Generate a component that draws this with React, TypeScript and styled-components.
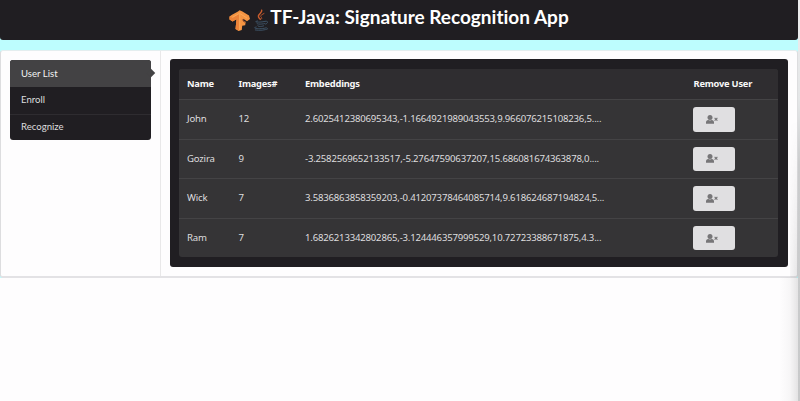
import React from "react";
import styled, { createGlobalStyle } from "styled-components";

const GlobalStyle = createGlobalStyle`
  *, *::before, *::after { box-sizing: border-box; }
  html, body { margin: 0; padding: 0; background: #fefdfe; overflow: hidden; }
`;

const Page = styled.div`
  position: relative;
  width: 800px;
  height: 401px;
  overflow: hidden;
  background: #fefdfe;
  font-family: Lato, sans-serif;
  font-variant-ligatures: none;
`;

const Backdrop = styled.div`
  width: 798px;
  background: #bdfdfe;
`;

const Header = styled.header`
  display: flex;
  justify-content: center;
  height: 40px;
  padding-top: 5px;
  background: #201e22;
  border-radius: 0 0 3px 3px;
`;

const Brand = styled.div`
  display: flex;
  height: 27px;
  align-items: flex-start;
`;

const TensorIcon = styled.svg`
  width: 22px;
  height: 23px;
  margin-top: 4px;
`;

const JavaIcon = styled.svg`
  width: 16px;
  height: 23px;
  margin: 3px 1px 0 2px;
`;

const Title = styled.h1`
  margin: 0;
  color: #fff;
  font-size: 19px;
  font-weight: 700;
  line-height: 24px;
  white-space: nowrap;
`;

const Content = styled.main`
  display: flex;
  height: 228px;
  margin-top: 10px;
  background: #fefdfe;
  border: 1px solid #dddddf;
  border-top-color: #e4eeef;
  border-bottom: 2px solid #e3e2e5;
  border-radius: 3px;
`;

const Sidebar = styled.aside`
  width: 160px;
  padding: 9px 0 0 9px;
  border-right: 1px solid #e9e8e9;
`;

const Menu = styled.nav`
  width: 141px;
  height: 80px;
  background: #201e22;
  border-radius: 3px;
`;

const MenuItem = styled.a<{ $active?: boolean }>`
  position: relative;
  display: flex;
  align-items: center;
  height: ${(p) => (p.$active ? 27 : 26.5)}px;
  padding-left: 11px;
  color: ${(p) => (p.$active ? "#f2f2f2" : "#dddddd")};
  background: ${(p) => (p.$active ? "#434244" : "transparent")};
  border-radius: ${(p) => (p.$active ? "3px 3px 0 0" : "0")};
  font-size: 9.6px;
  line-height: 12px;

  & + & + & { border-top: 1px solid #2e2c30; }

  &::after {
    content: "";
    display: ${(p) => (p.$active ? "block" : "none")};
    position: absolute;
    top: 10px;
    right: -3px;
    width: 6px;
    height: 6px;
    background: #434244;
    transform: rotate(45deg);
  }
`;

const Segment = styled.section`
  width: 618px;
  height: 208px;
  margin: 8px 0 0 9px;
  padding: 10px 10px 10px 9px;
  background: #201e22;
  border-radius: 3px;
`;

const Table = styled.div`
  height: 188px;
  background: #353436;
  border-radius: 3px;
  overflow: hidden;
  font-family: "Noto Sans", sans-serif;
  font-size: 9.6px;
  line-height: 14px;
  color: #dedddf;
`;

const Row = styled.div<{ $head?: boolean }>`
  display: grid;
  grid-template-columns: 51.5px 66.5px 388.5px 1fr;
  align-items: center;
  height: ${(p) => (p.$head ? 30 : 39.6)}px;
  padding-left: 8px;
  background: ${(p) => (p.$head ? "#2f2d30" : "transparent")};
  color: ${(p) => (p.$head ? "#f8f8f8" : "inherit")};
  font-size: ${(p) => (p.$head ? 9.3 : 9.6)}px;
  font-weight: ${(p) => (p.$head ? 700 : 400)};
  letter-spacing: ${(p) => (p.$head ? -0.22 : -0.2)}px;
  & + & { border-top: 1px solid #444345; }
`;

const Cell = styled.span`
  white-space: nowrap;
`;

const RemoveButton = styled.button`
  display: flex;
  align-items: center;
  width: 42px;
  height: 24.5px;
  margin-left: -1px;
  padding: 0 0 0 13px;
  border: 0;
  border-radius: 3px;
  background: #e0dfe1;
  color: #777678;
`;

const EdgeShadow = styled.div`
  position: absolute;
  top: 0;
  right: 0;
  width: 2px;
  height: 401px;
  background: linear-gradient(#ededee 0, #e4e6e7 100px, #cbcccd 165px, #c8c9ca 401px);
`;

const SoftShadow = styled.div`
  position: absolute;
  top: 120px;
  right: 2px;
  width: 18px;
  height: 281px;
  background: linear-gradient(90deg, transparent, rgba(80, 80, 80, 0.04) 55%, rgba(80, 80, 80, 0.15));
  mask-image: linear-gradient(transparent, #000 160px);
  clip-path: polygon(56% 0, 100% 0, 100% 100%, 0 100%, 0 157px, 56% 157px);
`;

const users = [
  { name: "John", images: 12, embeddings: "2.6025412380695343,-1.1664921989043553,9.966076215108236,5...." },
  { name: "Gozira", images: 9, embeddings: "-3.2582569652133517,-5.27647590637207,15.686081674363878,0...." },
  { name: "Wick", images: 7, embeddings: "3.5836863858359203,-0.41207378464085714,9.618624687194824,5..." },
  { name: "Ram", images: 7, embeddings: "1.6826213342802865,-3.124446357999529,10.72723388671875,4.3..." },
];

const UserRemoveIcon = () => (
  <svg width="12" height="9" viewBox="0 0 12 9" fill="currentColor" aria-hidden="true">
    <circle cx="4" cy="2.6" r="2.5" />
    <path d="M0 8.7V7.4C0 6 .8 5.3 2.2 5.1Q4 6 5.8 5.1C7.2 5.3 8 6 8 7.4v1.3Z" />
    <path d="m8.6 2.8 2.8 2.9m0-2.9L8.6 5.7" stroke="currentColor" strokeWidth="1.1" />
  </svg>
);

export default function App() {
  return (
    <Page>
      <GlobalStyle />
      <Backdrop>
        <Header>
          <Brand>
            <TensorIcon viewBox="0 0 22 23" aria-hidden="true">
              <path d="M.5 7.5 3 5.8 9 2.5 10.5 1.2 13 2.2 20 6.5 21 10 18 12.3 14.2 9.8 14 12 16.7 12.8 16.2 16.3 13.2 16.8 12.8 21 9.5 22 6.5 20 7.5 10.2 3.6 12.4.5 10.5Z" fill="#f49442" />
              <path d="m.5 7.5 3.1 1.3L10.3 5v16.8L6.5 20l1-9.8-3.9 2.2L.5 10.5Z" fill="#ed8439" />
              <path d="m3.5 8.3 7-4 7.6 4.8M10.7 5v16" fill="none" stroke="#ffad5e" strokeWidth=".8" />
              <path d="m14 10 .1 2 2 1.4" fill="none" stroke="#9c4e2b" strokeWidth="1" />
            </TensorIcon>
            <JavaIcon viewBox="0 0 16 23" fill="none" strokeLinecap="round" aria-hidden="true">
              <path d="M8.7 2.3C9.5 5.3 2 7 7.2 11.2" stroke="#c95c2d" strokeWidth="1.5" />
              <path d="M11 5.5c-4 2-3.8 2.7-2.5 4 .8.8 0 1.5-.7 1.9" stroke="#b4522c" />
              <path d="M4.5 13c-6 1.3 3 1.5 7.5.4M4 15.3c-1 1.2 5 1 7.5.3M4.7 17.6c-.6 1.2 4 1.2 6 .3M12.5 13.3c3.2-.7 2.6 2.2 0 2.8M3.2 19c-6 1.3 4.6 2.7 10.1.8M2.3 22c4 .7 10 .3 12.4-1.2" stroke="#40576c" strokeWidth=".9" />
            </JavaIcon>
            <Title>TF-Java: Signature Recognition App</Title>
          </Brand>
        </Header>
        <Content>
          <Sidebar>
            <Menu>
              <MenuItem $active>User List</MenuItem>
              <MenuItem>Enroll</MenuItem>
              <MenuItem>Recognize</MenuItem>
            </Menu>
          </Sidebar>
          <Segment>
            <Table>
              <Row $head>
                <Cell>Name</Cell>
                <Cell>Images#</Cell>
                <Cell>Embeddings</Cell>
                <Cell>Remove User</Cell>
              </Row>
              {users.map((user) => (
                <Row key={user.name}>
                  <Cell>{user.name}</Cell>
                  <Cell>{user.images}</Cell>
                  <Cell>{user.embeddings}</Cell>
                  <RemoveButton aria-label={`Remove ${user.name}`}>
                    <UserRemoveIcon />
                  </RemoveButton>
                </Row>
              ))}
            </Table>
          </Segment>
        </Content>
      </Backdrop>
      <EdgeShadow />
      <SoftShadow />
    </Page>
  );
}
